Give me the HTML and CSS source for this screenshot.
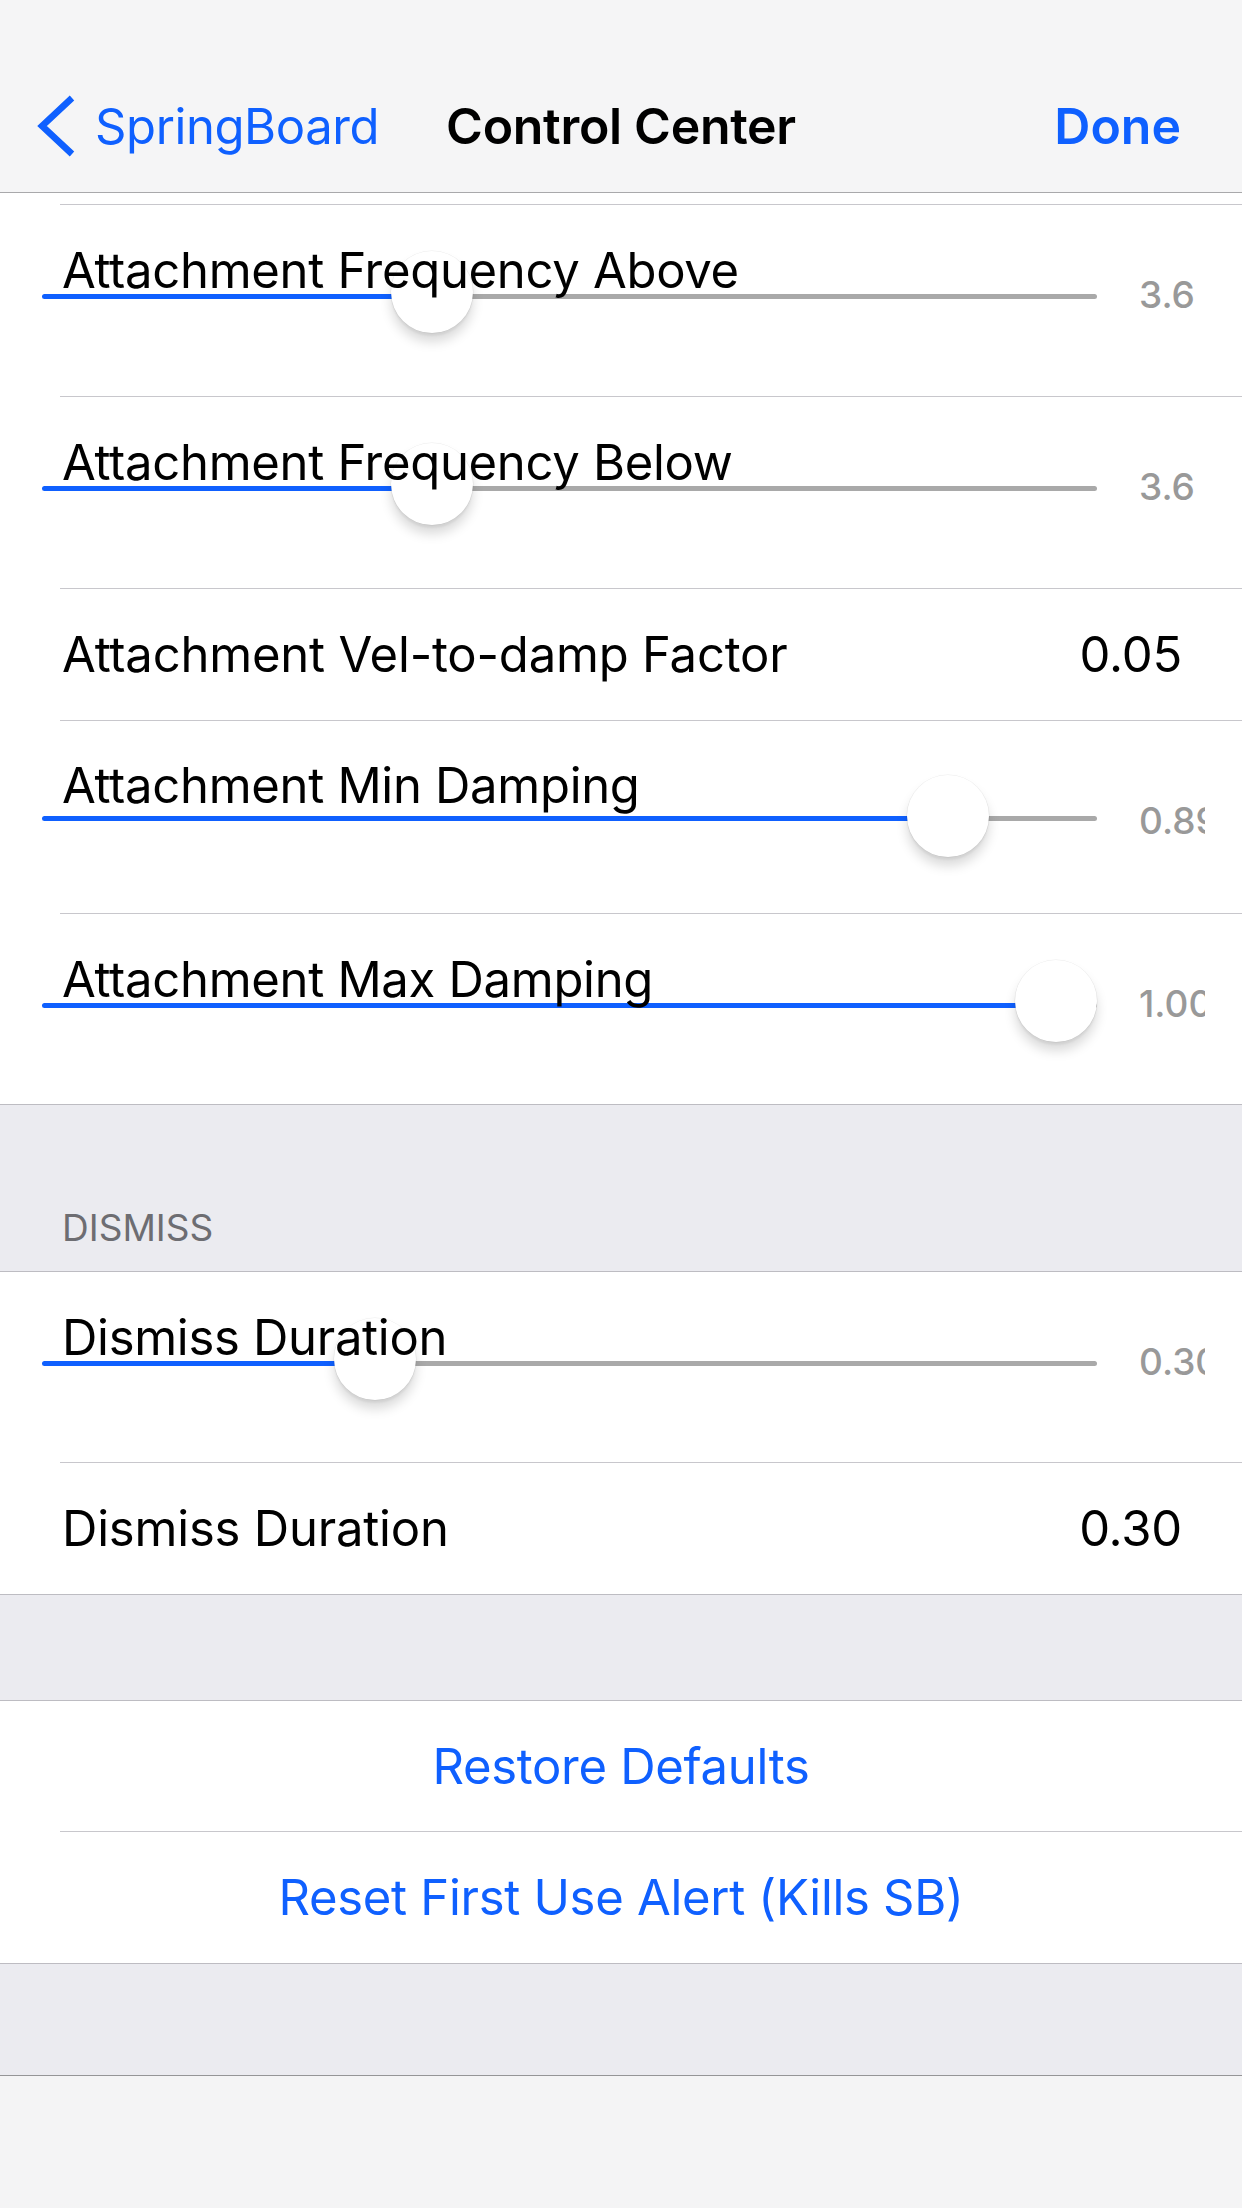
FILE: index.html
```html
<!DOCTYPE html>
<html lang="en">
<head>
<meta charset="utf-8">
<title>Control Center</title>
<link rel="stylesheet" href="styles.css">
</head>
<body>
<header class="nav">
  <div class="nav-left">
    <svg class="chev" width="38" height="62" viewBox="0 0 38 62"><polyline points="35,3 5,31 35,59" fill="none" stroke="#0f60ff" stroke-width="6.5"/></svg>
    <span>SpringBoard</span>
  </div>
  <div class="nav-title">Control Center</div>
  <div class="nav-right">Done</div>
</header>

<main class="list">
  <section class="group">
    <div class="row row--stub sep"></div>
    <div class="row slider-row h192 sep" style="--x:349px">
      <div class="slider"><div class="track"></div><div class="thumb"></div><div class="label">Attachment Frequency Above</div></div>
      <div class="value">3.6</div>
    </div>
    <div class="row slider-row h192 sep" style="--x:349px">
      <div class="slider"><div class="track"></div><div class="thumb"></div><div class="label">Attachment Frequency Below</div></div>
      <div class="value">3.6</div>
    </div>
    <div class="row text-row h132 sep">
      <span>Attachment Vel-to-damp Factor</span>
      <span>0.05</span>
    </div>
    <div class="row slider-row slider-row--low h193 sep" style="--x:865px">
      <div class="slider"><div class="track"></div><div class="thumb"></div><div class="label">Attachment Min Damping</div></div>
      <div class="value">0.89</div>
    </div>
    <div class="row slider-row h190" style="--x:973px">
      <div class="slider"><div class="track"></div><div class="thumb"></div><div class="label">Attachment Max Damping</div></div>
      <div class="value">1.00</div>
    </div>
  </section>

  <div class="group-header">DISMISS</div>

  <section class="group group--top">
    <div class="row slider-row h191 sep" style="--x:292px">
      <div class="slider"><div class="track"></div><div class="thumb"></div><div class="label">Dismiss Duration</div></div>
      <div class="value">0.30</div>
    </div>
    <div class="row text-row h131">
      <span>Dismiss Duration</span>
      <span>0.30</span>
    </div>
  </section>

  <div class="gap gap--a"></div>

  <section class="group group--top">
    <div class="row button-row h131 sep">Restore Defaults</div>
    <div class="row button-row h131">Reset First Use Alert (Kills SB)</div>
  </section>

  <div class="gap gap--b"></div>
</main>

<footer class="toolbar"></footer>
</body>
</html>
```

FILE: styles.css
```css
* { box-sizing: border-box; }

html, body {
  margin: 0;
  padding: 0;
}

body {
  width: 1242px;
  height: 2208px;
  overflow: hidden;
  display: flex;
  flex-direction: column;
  background: #ebebf0;
  font-family: Inter, "Liberation Sans", sans-serif;
  color: #000;
  -webkit-font-smoothing: antialiased;
}

/* ---------- navigation bar ---------- */
.nav {
  flex: 0 0 193px;
  height: 193px;
  background: #f5f5f6;
  border-bottom: 1px solid #a9a9ab;
  display: grid;
  grid-template-columns: 1fr auto 1fr;
  align-items: center;
  padding: 95px 37px 0 37px;
}

.nav > * {
  height: 62px;
  display: flex;
  align-items: center;
  align-self: start;
}

.nav-left {
  gap: 20px;
  color: #0f60ff;
  font-size: 49px;
  line-height: 1;
  letter-spacing: -0.4px;
}

.chev { display: block; overflow: visible; }

.nav-title {
  font-size: 50px;
  font-weight: 600;
  line-height: 1;
  letter-spacing: -0.3px;
}

.nav-right {
  justify-self: end;
  margin-right: 24px;
  color: #0f60ff;
  font-size: 50px;
  font-weight: 600;
  line-height: 1;
}

/* ---------- list ---------- */
.list {
  display: flex;
  flex-direction: column;
}

.group {
  background: #fff;
  border-bottom: 1px solid #bdbcc2;
  display: flex;
  flex-direction: column;
}

.group--top { border-top: 1px solid #bdbcc2; }

.row { flex: 0 0 auto; }

.sep {
  background-image: linear-gradient(#c8c7cc, #c8c7cc);
  background-repeat: no-repeat;
  background-position: left 60px bottom;
  background-size: calc(100% - 60px) 1px;
}

.row--stub { height: 12px; }
.h190 { height: 190px; }
.h191 { height: 191px; }
.h192 { height: 192px; }
.h193 { height: 193px; }
.h131 { height: 131px; }
.h132 { height: 132px; }

/* text rows */
.text-row {
  display: flex;
  align-items: center;
  justify-content: space-between;
  padding: 0 60px 0 62px;
  font-size: 49px;
  line-height: 1;
  letter-spacing: -0.2px;
}

.text-row.h132 { padding-bottom: 1px; }

/* button rows */
.button-row {
  display: flex;
  align-items: center;
  justify-content: center;
  color: #0f60ff;
  font-size: 49px;
  line-height: 1;
  letter-spacing: -0.3px;
}

/* slider rows */
.slider-row {
  display: grid;
  grid-template-columns: 1055px 66px;
  column-gap: 42px;
  padding-left: 42px;
  align-items: start;
}

.slider {
  display: grid;
  align-items: start;
  justify-items: start;
}

.slider > * { grid-area: 1 / 1; }

.track {
  width: 1055px;
  height: 5px;
  margin-top: 89px;
  border-radius: 3px;
  background: linear-gradient(to right, #0f60ff 0 calc(var(--x) + 41px), #a9a9a9 0);
}

.thumb {
  width: 82px;
  height: 82px;
  margin-top: 46px;
  margin-left: var(--x);
  border-radius: 50%;
  background: #fff;
  box-shadow: 0 0 0 0.5px rgba(0, 0, 0, 0.07), 0 9px 12px rgba(0, 0, 0, 0.15), 0 3px 2px rgba(0, 0, 0, 0.05);
}

.label {
  margin-top: 41px;
  margin-left: 20px;
  font-size: 49px;
  line-height: 1;
  letter-spacing: -0.3px;
  white-space: nowrap;
}

.value {
  width: 66px;
  overflow: hidden;
  white-space: nowrap;
  margin-top: 71px;
  font-size: 37px;
  font-weight: 500;
  line-height: 1;
  color: #999999;
}

.slider-row--low .track { margin-top: 95px; }
.slider-row--low .thumb { margin-top: 54px; }
.slider-row--low .label { margin-top: 40px; }
.slider-row--low .value { margin-top: 81px; }

/* section header */
.group-header {
  height: 166px;
  padding: 104px 0 0 62px;
  font-size: 37px;
  line-height: 1;
  color: #6d6d72;
}

.gap--a { height: 105px; }
.gap--b { height: 111px; }

/* bottom toolbar */
.toolbar {
  flex: 0 0 133px;
  background: #f4f4f5;
  border-top: 1px solid #959597;
}
```
